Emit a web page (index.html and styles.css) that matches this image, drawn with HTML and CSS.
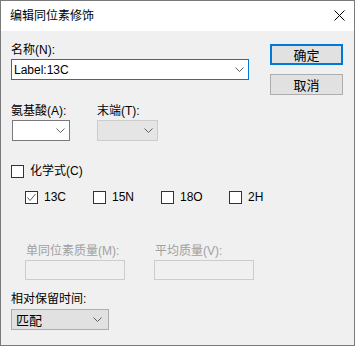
FILE: index.html
```html
<!DOCTYPE html>
<html lang="zh-CN">
<head>
  <meta charset="UTF-8" />
  <title>编辑同位素修饰</title>
  <link rel="stylesheet" href="styles.css">
</head>
<body>
  <div class="window">
    <div class="titlebar">
      <span class="title">编辑同位素修饰</span>
      <svg class="close" width="11" height="11" viewBox="0 0 11 11"><path d="M0.5 0.5 L10.5 10.5 M10.5 0.5 L0.5 10.5" stroke="#000" stroke-width="1" fill="none"/></svg>
    </div>

    <div class="content">
      <div class="top">
        <div class="name-col">
          <div class="label">名称(N):</div>
          <div class="combo combo-name">
            <span>Label:13C</span>
            <svg class="chev" width="9" height="5" viewBox="0 0 9 5"><polyline points="0.5,0.5 4.5,4.5 8.5,0.5" stroke="#606060" fill="none"/></svg>
          </div>
        </div>
        <div class="buttons">
          <div class="btn btn-default">确定</div>
          <div class="btn">取消</div>
        </div>
      </div>

      <div class="ends">
        <div class="field amino">
          <div class="label">氨基酸(A):</div>
          <div class="combo combo-small">
            <svg class="chev" width="9" height="5" viewBox="0 0 9 5"><polyline points="0.5,0.5 4.5,4.5 8.5,0.5" stroke="#606060" fill="none"/></svg>
          </div>
        </div>
        <div class="field term">
          <div class="label">末端(T):</div>
          <div class="combo combo-small disabled">
            <svg class="chev" width="9" height="5" viewBox="0 0 9 5"><polyline points="0.5,0.5 4.5,4.5 8.5,0.5" stroke="#606060" fill="none"/></svg>
          </div>
        </div>
      </div>

      <div class="check-row formula">
        <span class="box"></span>
        <span>化学式(C)</span>
      </div>

      <div class="isotopes">
        <div class="check-row iso">
          <span class="box">
            <svg width="11" height="11" viewBox="0 0 11 11"><polyline points="1.5,5.5 4,8.5 9.5,2" stroke="#606060" fill="none"/></svg>
          </span>
          <span>13C</span>
        </div>
        <div class="check-row iso"><span class="box"></span><span>15N</span></div>
        <div class="check-row iso"><span class="box"></span><span>18O</span></div>
        <div class="check-row iso"><span class="box"></span><span>2H</span></div>
      </div>

      <div class="masses">
        <div class="field mass">
          <div class="label dim">单同位素质量(M):</div>
          <div class="textbox"></div>
        </div>
        <div class="field mass">
          <div class="label dim">平均质量(V):</div>
          <div class="textbox"></div>
        </div>
      </div>

      <div class="label rt-label">相对保留时间:</div>
      <div class="select">
        <span>匹配</span>
        <svg class="chev" width="9" height="5" viewBox="0 0 9 5"><polyline points="0.5,0.5 4.5,4.5 8.5,0.5" stroke="#606060" fill="none"/></svg>
      </div>
    </div>
  </div>
</body>
</html>
```

FILE: styles.css
```css
body {
  margin: 0;
  font-family: "Liberation Sans", "Noto Sans CJK SC", sans-serif;
  font-size: 12px;
  color: #000;
}
.window {
  width: 355px;
  height: 346px;
  box-sizing: border-box;
  border: 1px solid #7a7a7a;
  background: #f0f0f0;
  display: flex;
  flex-direction: column;
}
.titlebar {
  height: 30px;
  background: #fff;
  display: flex;
  align-items: center;
  justify-content: space-between;
  padding: 0 9px 0 9px;
  flex-shrink: 0;
}
.title {
  font-size: 12px;
  line-height: 16px;
}
.close {
  display: block;
  margin-top: -1px;
}
.content {
  padding: 11px 10px 0 10px;
}
.label {
  line-height: 16px;
  height: 16px;
}
.dim {
  color: #a0a0a0;
}
.top {
  display: flex;
  justify-content: space-between;
}
.name-col .combo {
  margin-top: 1px;
}
.combo {
  box-sizing: border-box;
  border: 1px solid #7a7a7a;
  background: #fff;
  display: flex;
  align-items: center;
  justify-content: space-between;
  padding: 0 4px 0 2px;
}
.combo-name {
  width: 238px;
  height: 21px;
  border-color: #0078d7;
}
.combo-name span {
  line-height: 16px;
}
.chev {
  display: block;
  margin-left: auto;
}
.buttons {
  display: flex;
  flex-direction: column;
  gap: 9px;
  margin-top: 2px;
  margin-right: 1px;
}
.btn {
  box-sizing: border-box;
  width: 73px;
  height: 21px;
  border: 1px solid #adadad;
  background: #e1e1e1;
  display: flex;
  align-items: center;
  justify-content: center;
  font-size: 13px;
}
.btn-default {
  border: 2px solid #0078d7;
}
.ends {
  display: flex;
  margin-top: 8px;
}
.field .combo,
.field .textbox {
  margin-top: 1px;
}
.amino {
  width: 86px;
}
.combo-small {
  width: 58px;
  height: 21px;
  margin-left: 1px;
}
.term .combo-small {
  width: 61px;
  margin-left: 0;
}
.combo.disabled {
  background: #e5e5e5;
  border-color: #cccccc;
}
.check-row {
  display: flex;
  align-items: center;
  gap: 6px;
  height: 16px;
  line-height: 16px;
}
.box {
  box-sizing: border-box;
  width: 13px;
  height: 13px;
  border: 1px solid #333;
  background: #fff;
  display: flex;
  align-items: center;
  justify-content: center;
}
.box svg {
  display: block;
}
.formula {
  margin-top: 22px;
}
.isotopes {
  display: flex;
  margin-top: 10px;
  padding-left: 14px;
}
.iso {
  width: 68px;
}
.masses {
  display: flex;
  gap: 29px;
  margin-top: 38px;
  padding-left: 14px;
}
.mass .label {
  padding-left: 1px;
}
.textbox {
  box-sizing: border-box;
  width: 100px;
  height: 20px;
  border: 1px solid #cccccc;
  background: #f0f0f0;
}
.rt-label {
  margin-top: 11px;
}
.select {
  box-sizing: border-box;
  width: 98px;
  height: 21px;
  margin-top: 2px;
  border: 1px solid #adadad;
  background: #e1e1e1;
  display: flex;
  align-items: center;
  padding: 0 6px 0 4px;
  font-size: 13px;
}
```
